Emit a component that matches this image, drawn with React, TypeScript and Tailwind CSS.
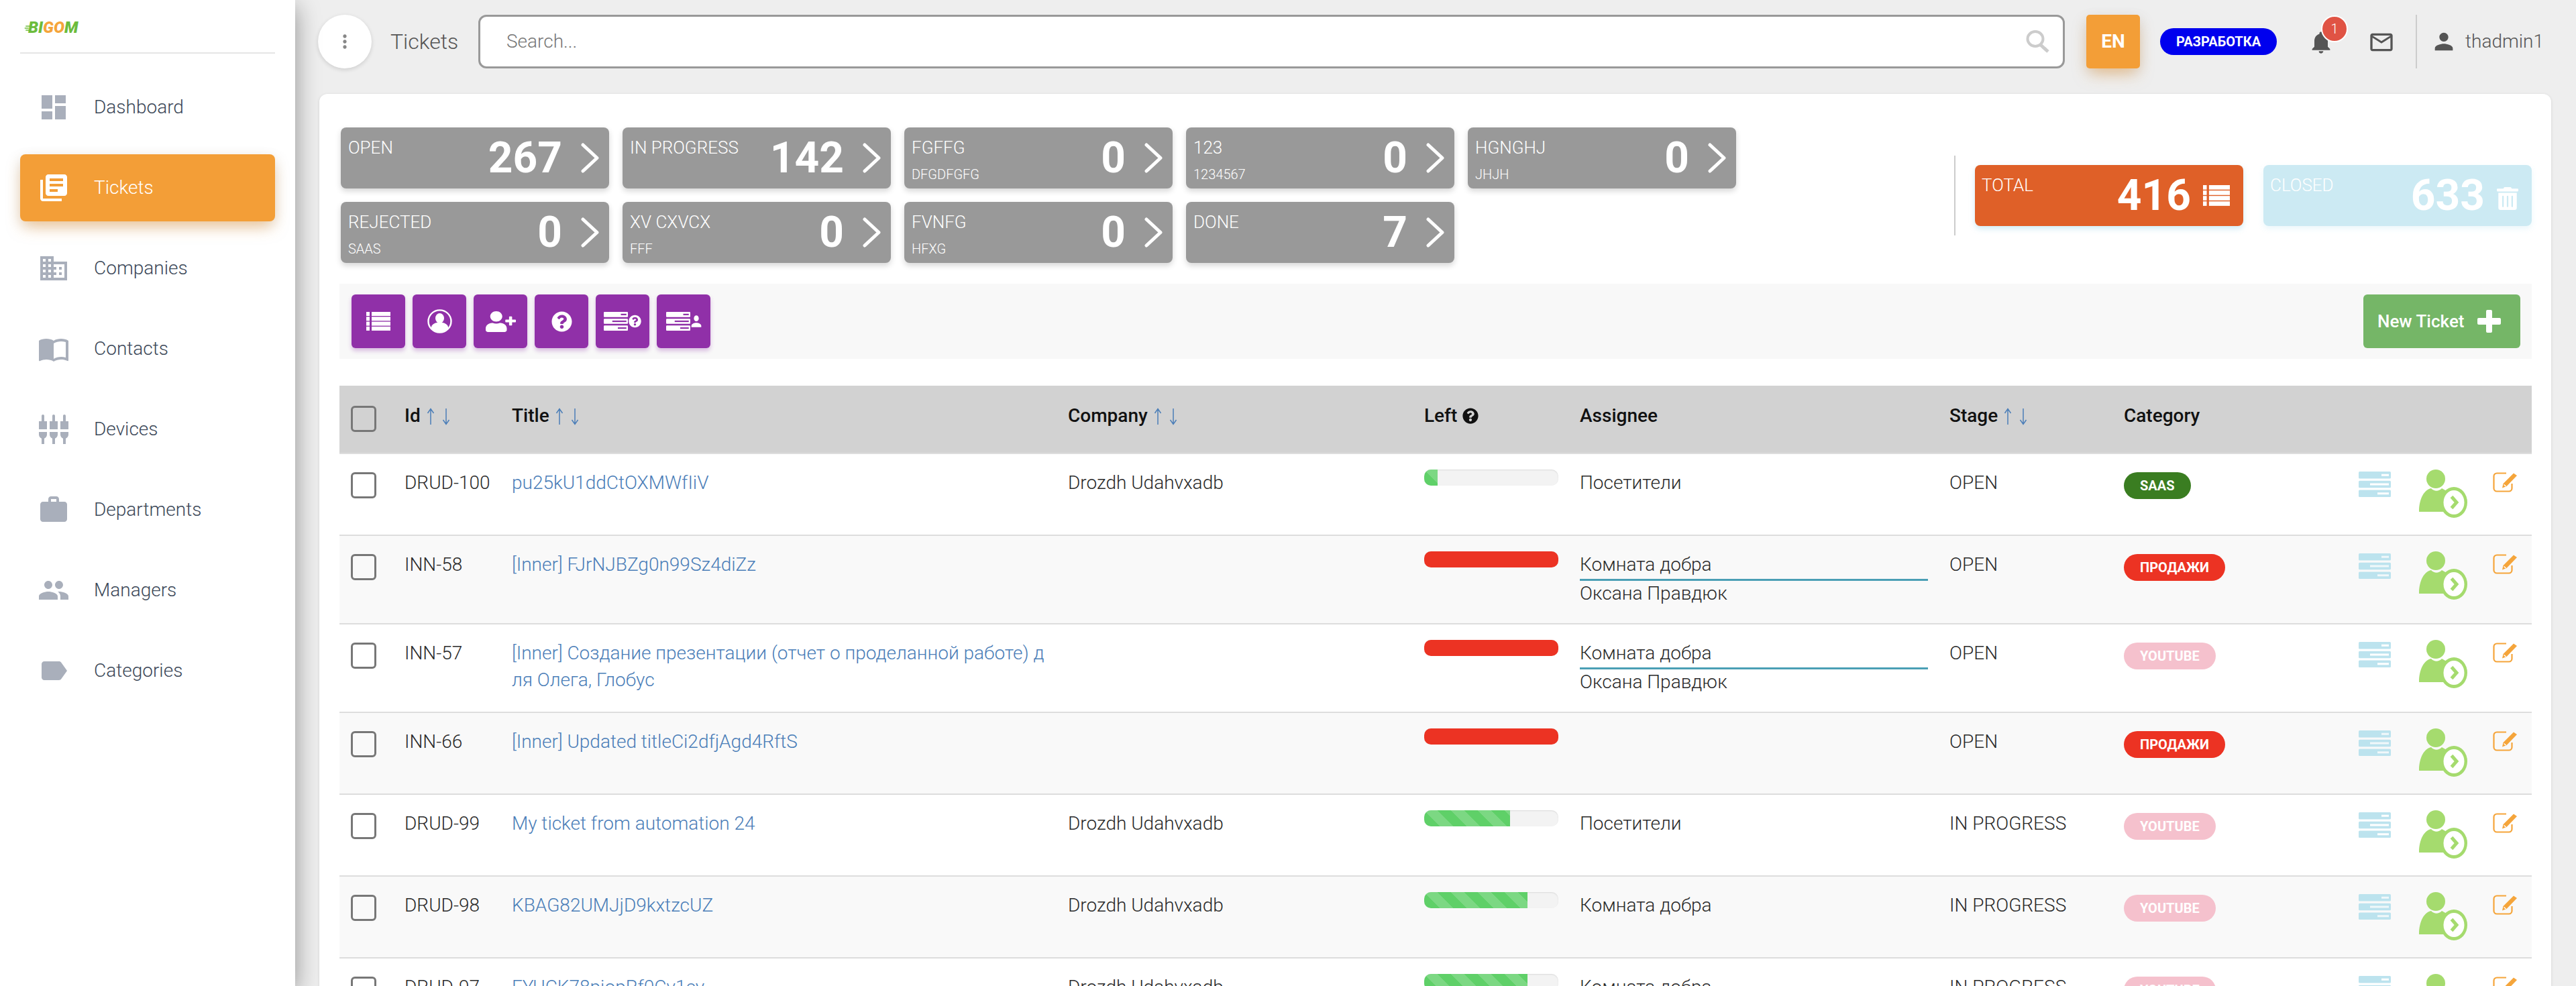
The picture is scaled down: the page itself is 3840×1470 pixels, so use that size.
import type { ReactNode } from 'react';
import { FaQuestionCircle, FaUserPlus, FaTrashAlt } from 'react-icons/fa';
import {
  MdBusiness,
  MdDashboard,
  MdImportContacts,
  MdLabel,
  MdLibraryBooks,
  MdMailOutline,
  MdMoreVert,
  MdNotifications,
  MdPeople,
  MdPerson,
  MdSettingsInputComponent,
  MdWork,
} from 'react-icons/md';

const NAV = [
  { label: 'Dashboard', icon: MdDashboard },
  { label: 'Tickets', icon: MdLibraryBooks, active: true },
  { label: 'Companies', icon: MdBusiness },
  { label: 'Contacts', icon: MdImportContacts },
  { label: 'Devices', icon: MdSettingsInputComponent },
  { label: 'Departments', icon: MdWork },
  { label: 'Managers', icon: MdPeople },
  { label: 'Categories', icon: MdLabel },
];

const STATS = [
  { label: 'OPEN', sub: '', value: 267 },
  { label: 'IN PROGRESS', sub: '', value: 142 },
  { label: 'FGFFG', sub: 'DFGDFGFG', value: 0 },
  { label: '123', sub: '1234567', value: 0 },
  { label: 'HGNGHJ', sub: 'JHJH', value: 0 },
  { label: 'REJECTED', sub: 'SAAS', value: 0 },
  { label: 'XV CXVCX', sub: 'FFF', value: 0 },
  { label: 'FVNFG', sub: 'HFXG', value: 0 },
  { label: 'DONE', sub: '', value: 7 },
];

type Category = 'SAAS' | 'ПРОДАЖИ' | 'YOUTUBE';

const BADGE: Record<Category, string> = {
  SAAS: 'bg-[#3a7d21]',
  ПРОДАЖИ: 'bg-[#ec3323]',
  YOUTUBE: 'bg-[#f5c1cd]',
};

interface Ticket {
  id: string;
  title: string;
  company: string;
  left: number;
  assignee: string;
  person?: string;
  stage: string;
  category: Category;
}

const TICKETS: Ticket[] = [
  { id: 'DRUD-100', title: 'pu25kU1ddCtOXMWfIiV', company: 'Drozdh Udahvxadb', left: 10, assignee: 'Посетители', stage: 'OPEN', category: 'SAAS' },
  { id: 'INN-58', title: '[Inner] FJrNJBZg0n99Sz4diZz', company: '', left: 100, assignee: 'Комната добра', person: 'Оксана Правдюк', stage: 'OPEN', category: 'ПРОДАЖИ' },
  { id: 'INN-57', title: '[Inner] Создание презентации (отчет о проделанной работе) для Олега, Глобус', company: '', left: 100, assignee: 'Комната добра', person: 'Оксана Правдюк', stage: 'OPEN', category: 'YOUTUBE' },
  { id: 'INN-66', title: '[Inner] Updated titleCi2dfjAgd4RftS', company: '', left: 100, assignee: '', stage: 'OPEN', category: 'ПРОДАЖИ' },
  { id: 'DRUD-99', title: 'My ticket from automation 24', company: 'Drozdh Udahvxadb', left: 64, assignee: 'Посетители', stage: 'IN PROGRESS', category: 'YOUTUBE' },
  { id: 'DRUD-98', title: 'KBAG82UMJjD9kxtzcUZ', company: 'Drozdh Udahvxadb', left: 77, assignee: 'Комната добра', stage: 'IN PROGRESS', category: 'YOUTUBE' },
  { id: 'DRUD-97', title: 'FYUCK78pjopRf0Cv1ey', company: 'Drozdh Udahvxadb', left: 77, assignee: 'Комната добра', stage: 'IN PROGRESS', category: 'YOUTUBE' },
];

function ListIcon({ className }: { className?: string }) {
  return (
    <svg viewBox="0 0 36 28" preserveAspectRatio="none" className={className} fill="currentColor">
      {[0, 7.3, 14.6, 21.9].map((y) => (
        <g key={y}>
          <rect x="0" y={y} width="5" height="6" />
          <rect x="8" y={y} width="28" height="6" />
        </g>
      ))}
    </svg>
  );
}

// три полки сервера, прорези разной длины
function ServerIcon({ className, slot }: { className?: string; slot: string }) {
  return (
    <svg viewBox="0 0 48 38" preserveAspectRatio="none" className={className}>
      <rect y="0" width="48" height="10.5" rx="1.5" fill="currentColor" />
      <rect y="13.750" width="48" height="10.5" rx="1.5" fill="currentColor" />
      <rect y="27.5" width="48" height="10.5" rx="1.5" fill="currentColor" />
      <rect x="34" y="3.750" width="11" height="3" fill={slot} />
      <rect x="17" y="17.5" width="28" height="3" fill={slot} />
      <rect x="28" y="31.250" width="17" height="3" fill={slot} />
    </svg>
  );
}

function ProfileIcon() {
  return (
    <svg viewBox="0 0 37 36" className="w-[37px] h-[36px]" fill="#fff">
      <ellipse cx="18.5" cy="18" rx="17" ry="16.6" fill="none" stroke="#fff" strokeWidth="2.4" />
      <ellipse cx="18.5" cy="13.5" rx="6.5" ry="7.5" />
      <path d="M5.5 28c1-6 6-7.5 9-8h8c3 .5 8 2 9 8-3 4.500-8 7-13 7s-10-2.500-13-7z" />
    </svg>
  );
}

function ChevronIcon() {
  return (
    <svg viewBox="0 0 27 45" className="w-[27px] h-[45px] shrink-0" fill="none" stroke="#fff" strokeWidth="5" strokeLinecap="round" strokeLinejoin="round">
      <path d="M3 3 24 22.500 3 42" />
    </svg>
  );
}

function SortArrows() {
  return (
    <svg viewBox="0 0 36 26" className="w-[36px] h-[26px] ml-[9px] mt-[2px]" fill="none" stroke="#4b7eb8" strokeWidth="1.5">
      <path d="M6 25V2M1.500 8 6 1.500 10.500 8" />
      <path d="M29 1v23M24.500 18 29 24.500 33.500 18" />
    </svg>
  );
}

function AssignIcon() {
  return (
    <svg viewBox="0 0 72 72" className="w-[72px] h-[72px]">
      <ellipse cx="25" cy="14" rx="14" ry="14" fill="#a5db6e" />
      <path d="M0 63c0-20 8-33 18-35 5 5 11 5 16 0l14 8-2 27z" fill="#a5db6e" />
      <ellipse cx="52" cy="49" rx="20" ry="23" fill="#a5db6e" />
      <ellipse cx="52" cy="49" rx="15.500" ry="18" fill="#fff" />
      <path d="M48.500 40.500 56 49l-7.500 8.500" fill="none" stroke="#a5db6e" strokeWidth="5" />
    </svg>
  );
}

function EditIcon() {
  return (
    <svg viewBox="0 0 37 30" className="w-[37px] h-[30px] ml-[38px] mt-[4px]" fill="none" stroke="#f5a53b">
      <path d="M20 1.500H6a4.500 4.500 0 0 0-4.500 4.500v18A4.500 4.500 0 0 0 6 28.500h18a4.500 4.500 0 0 0 4.500-4.500v-7" strokeWidth="2.2" />
      <path d="M14 23.500l1.500-6.500L31 1.500l5 3.500L20.500 21z" fill="#f5a53b" stroke="none" />
      <path d="M16.500 18.500 19.500 21" stroke="#fff" strokeWidth="1.500" />
    </svg>
  );
}

function Checkbox() {
  return <div className="w-[38px] h-[39px] rounded-[6px] border-[3px] border-[#777]" />;
}

function StatCard({ label, sub, value }: { label: string; sub: string; value: number }) {
  return (
    <div className="w-[400px] h-[91px] rounded-[8px] bg-[#999] text-white flex justify-between shadow-[0_4px_8px_rgba(0,0,0,0.16)]">
      <div className="pl-[11px] pt-[15px] font-light">
        <div className="text-[26px] leading-[30px]">{label}</div>
        {sub && <div className="text-[20px] leading-[24px] mt-[13px]">{sub}</div>}
      </div>
      <div className="flex items-center pr-[15px] gap-[28px]">
        <span className="text-[64px] leading-none font-bold">{value}</span>
        <ChevronIcon />
      </div>
    </div>
  );
}

function SummaryCard({ label, value, color, children }: { label: string; value: number; color: string; children: ReactNode }) {
  return (
    <div className={`w-[400px] h-[91px] rounded-[8px] text-white flex justify-between ${color}`}>
      <div className="pl-[10px] pt-[15px] text-[26px] leading-[30px] font-light">{label}</div>
      <div className="flex items-center pr-[20px] gap-[18px]">
        <span className="text-[64px] leading-none font-bold">{value}</span>
        {children}
      </div>
    </div>
  );
}

function ToolButton({ children }: { children: ReactNode }) {
  return (
    <button type="button" className="w-[80px] h-[80px] rounded-[6px] bg-[#9030a8] text-white flex items-center justify-center shadow-[0_4px_6px_rgba(144,48,168,0.3)]">
      {children}
    </button>
  );
}

function LeftBar({ value }: { value: number }) {
  const over = value === 100;
  return (
    <div className="w-[200px] h-[24px] rounded-[10px] bg-[#f3f3f3] overflow-hidden shadow-[inset_0_1px_2px_rgba(0,0,0,0.1)]">
      {over ? (
        <div className="h-full w-full bg-[#ec3323]" />
      ) : (
        <div
          className="h-full bg-[#5fd068] bg-[linear-gradient(45deg,rgba(255,255,255,0.18)_25%,transparent_25%,transparent_50%,rgba(255,255,255,0.18)_50%,rgba(255,255,255,0.18)_75%,transparent_75%,transparent)] bg-[length:40px_40px]"
          style={{ width: `${value}%` }}
        />
      )}
    </div>
  );
}

function HeadCell({ label, sort = true }: { label: string; sort?: boolean }) {
  return (
    <div className="flex items-center">
      <span>{label}</span>
      {sort && <SortArrows />}
    </div>
  );
}

function TicketRow({ t, odd }: { t: Ticket; odd: boolean }) {
  const td = 'align-top border-b-2 border-[#ddd] px-[16px] pt-[23px]';
  return (
    <tr className={`${t.person ? 'h-[132px]' : 'h-[122px]'} ${odd ? 'bg-[#f9f9f9]' : 'bg-white'}`}>
      <td className="align-top border-b-2 border-[#ddd] pl-[17px] pt-[27px]">
        <Checkbox />
      </td>
      <td className={td}>{t.id}</td>
      <td className={td}>
        <a className="text-[#4b7eb8] break-all">{t.title}</a>
      </td>
      <td className={td}>{t.company}</td>
      <td className="align-top border-b-2 border-[#ddd] px-[16px] pt-[23px]">
        <LeftBar value={t.left} />
      </td>
      <td className={td}>
        {t.person ? (
          <>
            <div className="border-b-[3px] border-[#4a9fb5] h-[44px]">{t.assignee}</div>
            <div className="mt-[-1px]">{t.person}</div>
          </>
        ) : (
          t.assignee
        )}
      </td>
      <td className={td}>{t.stage}</td>
      <td className="align-top border-b-2 border-[#ddd] px-[16px] pt-[25px]">
        <span className={`inline-block h-[40px] rounded-[20px] px-[24px] text-[20px] leading-[40px] font-bold text-white ${BADGE[t.category]}`}>
          {t.category}
        </span>
      </td>
      <td className="align-top border-b-2 border-[#ddd] pl-[16px] pt-[23px]">
        <div className="flex items-start">
          <ServerIcon className="w-[48px] h-[38px] mt-[3px] text-[#bce3ee]" slot={odd ? '#f0f8fa' : '#fff'} />
          <div className="ml-[42px]">
            <AssignIcon />
          </div>
          <EditIcon />
        </div>
      </td>
    </tr>
  );
}

export default function App() {
  return (
    <div className="h-[1470px] overflow-hidden flex bg-[#eee] font-['Roboto','Noto_Sans',sans-serif] text-[#2a2a2a]">
      <aside className="relative z-10 w-[440px] shrink-0 bg-white shadow-[0_10px_34px_rgba(0,0,0,0.4)]">
        <div className="mx-[30px] h-[80px] border-b-2 border-[#e5e5e5] pl-[6px] pt-[32px]">
          <div className="flex items-center h-[18px]">
            <svg viewBox="0 0 12 12" className="w-[9px] h-[12px] mr-[-3px] mt-[1px]" fill="#6cbc3c">
              <rect x="3" y="1" width="9" height="2" />
              <rect x="1" y="5" width="8" height="2" />
              <rect x="3" y="9" width="7" height="2" />
            </svg>
            <span className="text-[24px] leading-[18px] italic font-black">
              <span className="text-[#6cbc3c]">BI</span>
              <span className="text-[#f5a53b]">GO</span>
              <span className="text-[#6cbc3c]">M</span>
            </span>
          </div>
        </div>
        <nav className="mx-[30px] mt-[30px] flex flex-col gap-[20px]">
          {NAV.map(({ label, icon: Icon, active }) => (
            <div
              key={label}
              className={`h-[100px] rounded-[8px] flex items-center pl-[26px] text-[28px] font-light ${
                active ? 'bg-[#f39e37] text-white shadow-[0_12px_24px_-6px_rgba(243,158,55,0.5),0_6px_20px_rgba(0,0,0,0.12)]' : 'text-[#3c4858]'
              }`}
            >
              <Icon className={`w-[48px] h-[48px] ${active ? 'text-white' : 'text-[#a9afbb]'}`} />
              <span className="ml-[36px]">{label}</span>
            </div>
          ))}
        </nav>
      </aside>

      <main className="flex-1 min-w-0">
        <header className="h-[102px] pt-[22px] pl-[34px] flex items-start">
          <button type="button" className="w-[80px] h-[80px] rounded-full bg-white flex items-center justify-center shadow-[0_2px_6px_rgba(0,0,0,0.14)]">
            <MdMoreVert className="w-[32px] h-[32px] text-[#888]" />
          </button>
          <div className="ml-[28px] w-[103px] h-[80px] flex items-center text-[32px] font-light text-[#555]">Tickets</div>
          <div className="ml-[28px] w-[2365px] h-[80px] rounded-[12px] border-[3px] border-[#999] bg-white flex items-center justify-between pl-[39px] pr-[20px]">
            <span className="text-[28px] font-light text-[#777]">Search...</span>
            <svg viewBox="0 0 35 34" className="w-[35px] h-[34px]" fill="none" stroke="#ccc">
              <ellipse cx="14" cy="13" rx="11.500" ry="11" strokeWidth="4" />
              <path d="M22 22 33 32" strokeWidth="5" />
            </svg>
          </div>
          <div className="ml-[32px] w-[80px] h-[80px] rounded-[5px] bg-[#f39e37] text-white text-[28px] font-bold flex items-center justify-center shadow-[0_12px_24px_-6px_rgba(243,158,55,0.5),0_6px_20px_rgba(0,0,0,0.1)]">
            EN
          </div>
          <div className="ml-[30px] mt-[20px] h-[40px] w-[174px] rounded-[20px] bg-[#0000ee] text-white text-[20px] font-bold flex items-center justify-center">
            РАЗРАБОТКА
          </div>
          <div className="relative ml-[46px] mt-[21px]">
            <MdNotifications className="w-[40px] h-[40px] text-[#555]" />
            <span className="absolute left-[20px] top-[-20px] w-[40px] h-[40px] rounded-full border-2 border-white bg-[#e05344] text-white text-[20px] font-light flex items-center justify-center">
              1
            </span>
          </div>
          <MdMailOutline className="ml-[50px] mt-[21px] w-[40px] h-[40px] text-[#555]" />
          <div className="ml-[31px] w-[2px] h-[80px] bg-[#ccc]" />
          <MdPerson className="ml-[20px] mt-[20px] w-[40px] h-[40px] text-[#555]" />
          <span className="ml-[12px] h-[80px] flex items-center text-[28px] font-light text-[#555]">thadmin1</span>
        </header>

        <section className="relative z-20 mt-[38px] ml-[36px] w-[3327px] min-h-[1400px] rounded-[12px] bg-white pl-[30px] pr-[29px] pt-[50px] shadow-[0_1px_4px_rgba(0,0,0,0.12)]">
          <div className="flex justify-between items-start">
            <div className="pl-[2px] w-[2102px] flex flex-wrap gap-x-[20px] gap-y-[20px]">
              {STATS.map((s) => (
                <StatCard key={s.label} {...s} />
              ))}
            </div>
            <div className="mt-[42px] h-[119px] border-l-2 border-[#ccc] pl-[29px] pt-[14px] flex items-start gap-[30px]">
              <div className="shadow-[0_4px_8px_rgba(120,200,225,0.35)] rounded-[8px]">
                <SummaryCard label="TOTAL" value={416} color="bg-[#df6028]">
                  <ListIcon className="w-[40px] h-[31px]" />
                </SummaryCard>
              </div>
              <div className="shadow-[0_4px_8px_rgba(120,200,225,0.15)] rounded-[8px]">
                <SummaryCard label="CLOSED" value={633} color="bg-[#cceaf3]">
                  <FaTrashAlt className="w-[32px] h-[34px] mt-[8px]" preserveAspectRatio="none" />
                </SummaryCard>
              </div>
            </div>
          </div>

          <div className="mt-[31px] h-[112px] bg-[#f8f8f8] pl-[18px] pr-[17px] py-[16px] flex justify-between">
            <div className="flex gap-[11px]">
              <ToolButton>
                <ListIcon className="w-[36px] h-[28px]" />
              </ToolButton>
              <ToolButton>
                <ProfileIcon />
              </ToolButton>
              <ToolButton>
                <FaUserPlus className="w-[45px] h-[31px]" preserveAspectRatio="none" />
              </ToolButton>
              <ToolButton>
                <FaQuestionCircle className="w-[31px] h-[31px]" />
              </ToolButton>
              <ToolButton>
                <div className="flex items-center gap-[1px]">
                  <ServerIcon className="w-[36px] h-[28px] text-white" slot="#9030a8" />
                  <FaQuestionCircle className="w-[19px] h-[20px]" />
                </div>
              </ToolButton>
              <ToolButton>
                <div className="flex items-center gap-[1px]">
                  <ServerIcon className="w-[36px] h-[28px] text-white" slot="#9030a8" />
                  <MdPerson className="w-[22px] h-[26px] mx-[-3px]" preserveAspectRatio="none" />
                </div>
              </ToolButton>
            </div>
            <button type="button" className="w-[234px] h-[80px] rounded-[6px] bg-[#75b667] text-white text-[26px] font-medium flex items-center pl-[21px]">
              New Ticket
              <svg viewBox="0 0 35 34" className="w-[35px] h-[34px] ml-[20px]" fill="#fff">
                <rect x="13" y="0" width="9" height="34" rx="2" />
                <rect x="0" y="12" width="35" height="10" rx="2" />
              </svg>
            </button>
          </div>

          <table className="mt-[40px] w-[3268px] table-fixed border-separate border-spacing-0 text-[28px] leading-[40px] font-light">
            <colgroup>
              <col className="w-[81px]" />
              <col className="w-[160px]" />
              <col className="w-[829px]" />
              <col className="w-[531px]" />
              <col className="w-[232px]" />
              <col className="w-[551px]" />
              <col className="w-[260px]" />
              <col className="w-[350px]" />
              <col className="w-[274px]" />
            </colgroup>
            <thead>
              <tr className="h-[102px] bg-[#d2d2d2] text-left text-[#111]">
                <th className="align-top border-b-2 border-[#ddd] pl-[17px] pt-[30px]">
                  <Checkbox />
                </th>
                <th className="align-top border-b-2 border-[#ddd] px-[16px] pt-[25px] font-medium"><HeadCell label="Id" /></th>
                <th className="align-top border-b-2 border-[#ddd] px-[16px] pt-[25px] font-medium"><HeadCell label="Title" /></th>
                <th className="align-top border-b-2 border-[#ddd] px-[16px] pt-[25px] font-medium"><HeadCell label="Company" /></th>
                <th className="align-top border-b-2 border-[#ddd] px-[16px] pt-[25px] font-medium">
                  <div className="flex items-center">
                    Left
                    <FaQuestionCircle className="ml-[8px] w-[24px] h-[24px]" />
                  </div>
                </th>
                <th className="align-top border-b-2 border-[#ddd] px-[16px] pt-[25px] font-medium"><HeadCell label="Assignee" sort={false} /></th>
                <th className="align-top border-b-2 border-[#ddd] px-[16px] pt-[25px] font-medium"><HeadCell label="Stage" /></th>
                <th className="align-top border-b-2 border-[#ddd] px-[16px] pt-[25px] font-medium"><HeadCell label="Category" sort={false} /></th>
                <th className="border-b-2 border-[#ddd]" />
              </tr>
            </thead>
            <tbody>
              {TICKETS.map((t, i) => (
                <TicketRow key={t.id} t={t} odd={i % 2 === 1} />
              ))}
            </tbody>
          </table>
        </section>
      </main>
    </div>
  );
}
